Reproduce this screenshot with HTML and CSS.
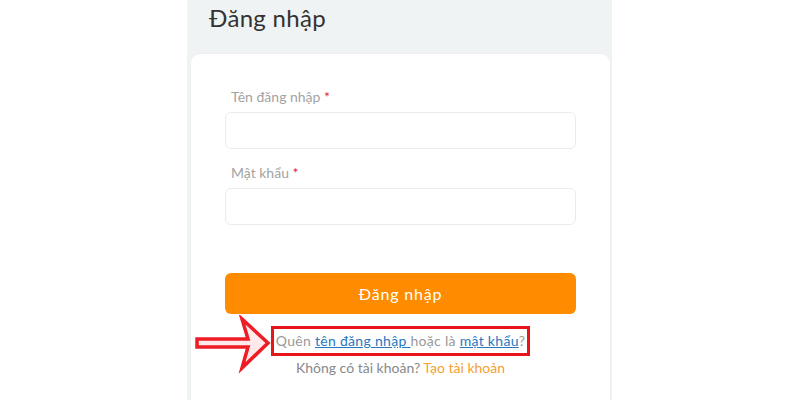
FILE: index.html
```html
<!DOCTYPE html>
<html lang="vi">
<head>
    <meta charset="utf-8">
    <meta name="viewport" content="width=device-width, initial-scale=1">
    <title>Đăng nhập</title>
    <link rel="stylesheet" href="styles.css">
</head>
<body>
    <div id="page">
        <div class="panel">
            <h1 class="title">Đăng nhập</h1>
            <div class="card">
                <div class="field">
                    <label for="inputID">Tên đăng nhập <span class="req">*</span></label>
                    <input type="text" id="inputID" class="form-control">
                </div>
                <div class="field">
                    <label for="inputPassword">Mật khẩu <span class="req">*</span></label>
                    <input type="password" id="inputPassword" class="form-control">
                </div>
                <button type="button" class="btn-login">Đăng nhập</button>
                <div class="forgot">
                    <span class="mark">Quên <a href="#" class="link">tên đăng nhập </a>hoặc là <a href="#" class="link">mật khẩu</a>?</span>
                </div>
                <div class="signup">Không có tài khoản? <a href="#" class="link-orange">Tạo tài khoản</a></div>
            </div>
        </div>

        <!-- mũi tên chú thích -->
        <svg class="arrow" width="90" height="60" viewBox="0 0 90 60">
            <polygon points="7,24 58,24 52,4 78,28 52,53 58,32 7,32" fill="#ffe9ea" stroke="#ee1c24" stroke-width="3.5" stroke-linejoin="miter"/>
        </svg>
    </div>
</body>
</html>
```

FILE: styles.css
```css
body{
    margin:0;
    background:#fff;
    font-family:"Lato","Noto Sans",sans-serif;
}
#page{
    position:relative;
    width:800px;
    height:400px;
    overflow:hidden;
}
.panel{
    margin-left:187px;
    width:425px;
    height:400px;
    background:#f0f3f4;
    display:flex;
    flex-direction:column;
}
.title{
    margin:0;
    padding:2px 0 0 22px;
    height:51px;
    font-size:24px;
    font-weight:400;
    line-height:32px;
    letter-spacing:0.3px;
    color:#333;
}
.card{
    flex:1;
    margin:0 1px 0 3px;
    background:#fff;
    border:1px solid #eceff0;
    border-bottom:none;
    border-radius:10px 10px 0 0;
    padding:34px 34px 0 34px;
}
.field{
    display:flex;
    flex-direction:column;
    margin-bottom:15px;
}
.field label{
    font-size:14px;
    line-height:18px;
    color:#a3a3a3;
    padding-left:6px;
    margin-bottom:6px;
}
.req{
    color:#e0244a;
}
.form-control{
    height:37px;
    box-sizing:border-box;
    border:1px solid #e9ecee;
    border-radius:6px;
    background:#fff;
}
.btn-login{
    display:block;
    width:100%;
    height:41px;
    margin-top:48px;
    border:none;
    border-radius:6px;
    background:#ff8c00;
    color:#fff;
    font-family:inherit;
    font-size:16px;
    letter-spacing:0.8px;
}
.forgot{
    margin-top:12px;
    text-align:center;
}
.mark{
    display:inline-block;
    border:3px solid #e8141b;
    padding:0 2px;
    font-size:14px;
    line-height:24px;
    letter-spacing:0.3px;
    color:#999;
}
.link{
    color:#2878c0;
    text-decoration:underline;
}
.signup{
    text-align:center;
    font-size:14px;
    line-height:20px;
    color:#888;
    margin-top:2px;
}
.link-orange{
    color:#f5a034;
    text-decoration:none;
}
.arrow{
    position:absolute;
    left:190px;
    top:315px;
}
```
